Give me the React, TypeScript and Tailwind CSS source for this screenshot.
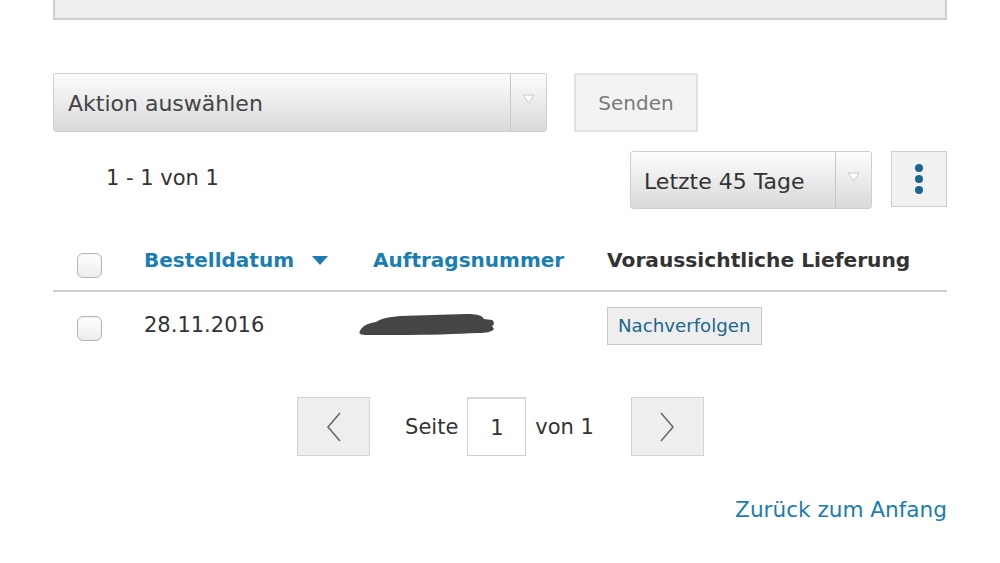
import React from "react";

const font = { fontFamily: '"DejaVu Sans", Verdana, sans-serif' };

function Arrow() {
  return (
    <svg width="13" height="10" viewBox="0 0 13 10">
      <path d="M1 1 L6.5 9 L12 1 Z" fill="#fff" stroke="#c8c8c8" strokeWidth="1" />
    </svg>
  );
}

function Checkbox() {
  return (
    <div className="w-[25px] h-[25px] rounded-[6px] border border-[#b5b5b5] bg-gradient-to-b from-white to-[#ececec] shadow-[inset_0_1px_1px_rgba(0,0,0,0.05)]" />
  );
}

export default function App() {
  return (
    <div className="w-[1000px] h-[563px] bg-white overflow-hidden text-[#333]" style={font}>
      <div className="mx-[53px] h-[20px] bg-[#eeeeee] border-x-2 border-b-2 border-[#cfcfcf]" />

      <div className="mx-[53px] mt-[53px] flex gap-[27px]">
        <div className="w-[494px] h-[59px] flex rounded-[3px] border border-[#cfcfcf] bg-gradient-to-b from-[#fdfdfd] to-[#d9d9d9]">
          <div className="flex-1 flex items-center pl-[14px] pt-[2px] text-[22px] text-[#444]">Aktion auswählen</div>
          <div className="w-[36px] border-l border-[#c8c8c8] flex items-start justify-center pt-[20px]">
            <Arrow />
          </div>
        </div>
        <div className="w-[124px] h-[59px] border-2 border-[#e2e2e2] bg-[#f3f3f3] flex items-center justify-center text-[20px] text-[#7a7a7a]">
          Senden
        </div>
      </div>

      <div className="mx-[53px] mt-[19px] flex items-start">
        <div className="pl-[53px] pt-[12px] text-[21px] text-[#333]">1 - 1 von 1</div>
        <div className="ml-auto flex gap-[19px]">
          <div className="w-[242px] h-[58px] flex rounded-[3px] border border-[#cfcfcf] bg-gradient-to-b from-[#fdfdfd] to-[#d9d9d9]">
            <div className="flex-1 flex items-center pl-[13px] pt-[3px] text-[22px] text-[#333]">Letzte 45 Tage</div>
            <div className="w-[36px] border-l border-[#c8c8c8] flex items-start justify-center pt-[20px]">
              <Arrow />
            </div>
          </div>
          <div className="w-[56px] h-[56px] border border-[#cfcfcf] bg-[#f1f1f1] flex flex-col items-center justify-center gap-[3px]">
            <div className="w-[8px] h-[8px] rounded-full bg-[#1b6690]" />
            <div className="w-[8px] h-[8px] rounded-full bg-[#1b6690]" />
            <div className="w-[8px] h-[8px] rounded-full bg-[#1b6690]" />
          </div>
        </div>
      </div>

      <div className="mx-[53px] mt-[36px] h-[47px] flex items-start border-b-2 border-[#cfcfcf]">
        <div className="w-[91px] pl-[24px] pt-[8px]"><Checkbox /></div>
        <div className="w-[229px] flex items-center gap-[18px] text-[20px] font-bold text-[#1a7db3]">
          <span>Bestelldatum</span>
          <svg width="16" height="9" viewBox="0 0 16 9"><path d="M0 0 L16 0 L8 9 Z" fill="#1a7db3" /></svg>
        </div>
        <div className="w-[234px] text-[20px] font-bold text-[#1a7db3]">Auftragsnummer</div>
        <div className="text-[20.2px] font-bold text-[#333]">Voraussichtliche Lieferung</div>
      </div>

      <div className="mx-[53px] h-[70px] flex items-start">
        <div className="w-[91px] pl-[24px] pt-[24px]"><Checkbox /></div>
        <div className="w-[214px] pt-[18px] text-[21px] text-[#333]">28.11.2016</div>
        <div className="w-[249px] pt-[19px]">
          <svg width="140" height="26" viewBox="0 0 140 26">
            <path d="M2 20 C4 15 10 12 18 11 C22 8 30 6 42 5 L108 3 C118 3 124 4 126 8 L134 9 C137 11 136 14 134 15 L136 18 C134 21 128 22 120 22 C100 23 70 24 40 24 L10 24 C3 24 0 23 2 20 Z" fill="#454545" />
          </svg>
        </div>
        <div className="pt-[15px]">
          <div className="h-[38px] px-[10px] border border-[#c8c8c8] bg-[#eeeeee] flex items-center text-[18.2px] text-[#1b6690]">
            Nachverfolgen
          </div>
        </div>
      </div>

      <div className="mt-[35px] flex items-center justify-center pl-[1px]">
        <div className="w-[73px] h-[59px] border border-[#d3d3d3] bg-[#eeeeee] flex items-center justify-center">
          <svg width="16" height="30" viewBox="0 0 16 30"><path d="M14 1 L2 15 L14 29" fill="none" stroke="#6a6a6a" strokeWidth="1.6" /></svg>
        </div>
        <span className="ml-[35px] mr-[9px] pt-[3px] text-[21px] text-[#333]">Seite</span>
        <div className="w-[59px] h-[59px] pt-[3px] border border-[#cfcfcf] border-t-2 border-t-[#d8d8d8] bg-white flex items-center justify-center text-[21px] text-[#333]">1</div>
        <span className="ml-[9px] mr-[37px] pt-[3px] text-[21px] text-[#333]">von 1</span>
        <div className="w-[73px] h-[59px] border border-[#d3d3d3] bg-[#eeeeee] flex items-center justify-center">
          <svg width="16" height="30" viewBox="0 0 16 30"><path d="M2 1 L14 15 L2 29" fill="none" stroke="#6a6a6a" strokeWidth="1.6" /></svg>
        </div>
      </div>

      <div className="mx-[53px] mt-[38px] flex justify-end text-[21.6px] text-[#1a7db3]">Zurück zum Anfang</div>
    </div>
  );
}
